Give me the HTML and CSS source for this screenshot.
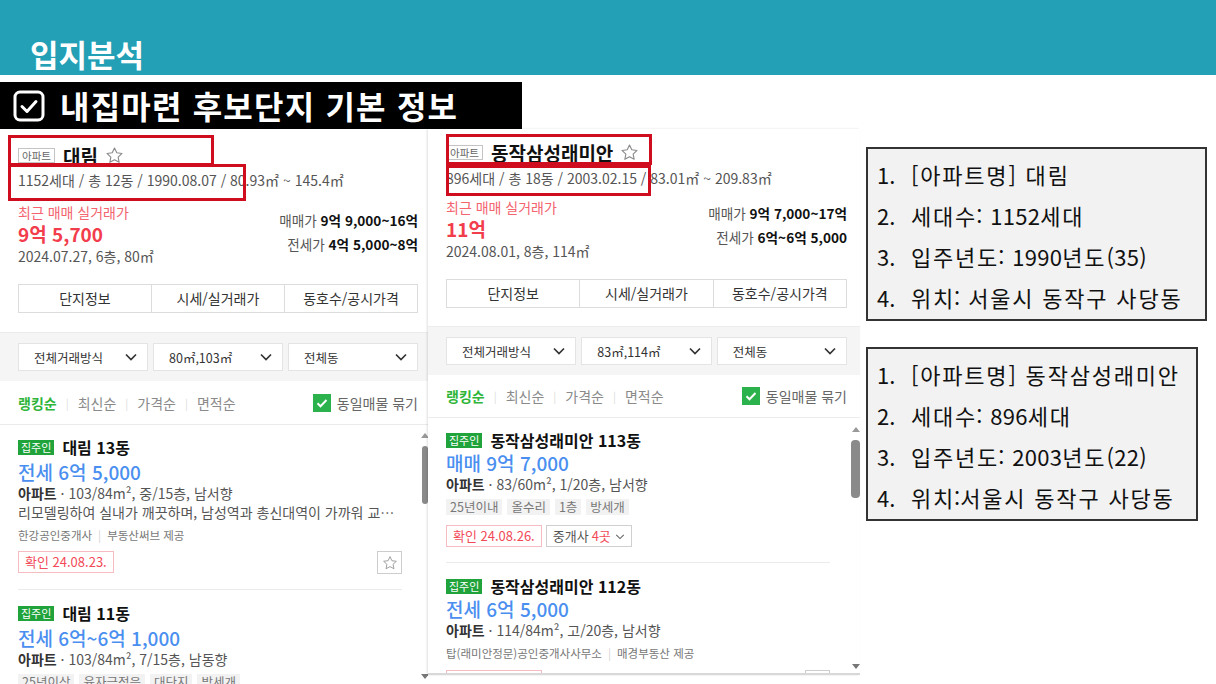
FILE: index.html
```html
<!DOCTYPE html>
<html lang="ko">
<head>
<meta charset="utf-8">
<title>입지분석</title>
<link rel="stylesheet" href="styles.css">
</head>
<body>
<header class="topbar"><h1 class="page-title">입지분석</h1></header>
<div class="section-band">
  <svg class="band-check" viewBox="0 0 32 32"><rect x="2" y="2" width="28" height="28" rx="5" fill="none" stroke="#fff" stroke-width="3"/><path d="M9 16.5l5 5 9-10" fill="none" stroke="#fff" stroke-width="3" stroke-linecap="round" stroke-linejoin="round"/></svg>
  <span class="band-text">내집마련 후보단지 기본 정보</span>
</div>
<main class="content">
  <section class="panel panel-left">
    <div class="complex">
      <div class="complex-title"><span class="type-tag">아파트</span><strong class="complex-name">대림</strong><svg class="star-icon" viewBox="0 0 24 24"><path d="M12 2.5l2.9 6.1 6.6.8-4.9 4.6 1.3 6.6L12 17.4l-5.9 3.2 1.3-6.6-4.9-4.6 6.6-.8z" fill="none" stroke="#8a8a8a" stroke-width="1.4" stroke-linejoin="round"/></svg></div>
      <div class="complex-meta">1152세대 / 총 12동 / 1990.08.07 / 80.93㎡ ~ 145.4㎡</div>
      <div class="price-block">
        <div class="recent">
          <div class="recent-label">최근 매매 실거래가</div>
          <div class="recent-price">9억 5,700</div>
          <div class="recent-date">2024.07.27, 6층, 80㎡</div>
        </div>
        <div class="range">
          <div class="range-row">매매가 <b>9억 9,000~16억</b></div>
          <div class="range-row">전세가 <b>4억 5,000~8억</b></div>
        </div>
      </div>
      <div class="tabs"><div class="tab">단지정보</div><div class="tab">시세/실거래가</div><div class="tab">동호수/공시가격</div></div>
    </div>
    <div class="filters">
      <div class="select"><span>전체거래방식</span><svg class="chev" viewBox="0 0 12 8"><path d="M1 1.5l5 5 5-5" fill="none" stroke="#333" stroke-width="1.7"/></svg></div>
      <div class="select"><span>80㎡,103㎡</span><svg class="chev" viewBox="0 0 12 8"><path d="M1 1.5l5 5 5-5" fill="none" stroke="#333" stroke-width="1.7"/></svg></div>
      <div class="select"><span>전체동</span><svg class="chev" viewBox="0 0 12 8"><path d="M1 1.5l5 5 5-5" fill="none" stroke="#333" stroke-width="1.7"/></svg></div>
    </div>
    <div class="sort">
      <div class="sort-opts"><span class="sort-on">랭킹순</span><span class="sep">|</span><span>최신순</span><span class="sep">|</span><span>가격순</span><span class="sep">|</span><span>면적순</span></div>
      <div class="group"><span class="cbox"><svg viewBox="0 0 18 18"><path d="M4.5 9.2l3 3 6-6.2" fill="none" stroke="#fff" stroke-width="2"/></svg></span>동일매물 묶기</div>
    </div>
    <div class="listings">
      <article class="item">
        <div class="item-title"><span class="owner-tag">집주인</span><strong class="item-name">대림 13동</strong></div>
        <div class="item-price">전세 6억 5,000</div>
        <div class="item-spec"><b>아파트</b> · 103/84m², 중/15층, 남서향</div>
        <div class="item-desc">리모델링하여 실내가 깨끗하며, 남성역과 총신대역이 가까워 교…</div>
        <div class="item-broker">한강공인중개사<span class="bsep">|</span>부동산써브 제공</div>
        <div class="item-actions">
          <div class="act-left"><span class="confirm">확인 24.08.23.</span></div>
          <span class="fav-box"><svg viewBox="0 0 24 24"><path d="M12 2.5l2.9 6.1 6.6.8-4.9 4.6 1.3 6.6L12 17.4l-5.9 3.2 1.3-6.6-4.9-4.6 6.6-.8z" fill="none" stroke="#999" stroke-width="1.4" stroke-linejoin="round"/></svg></span>
        </div>
      </article>
      <article class="item">
        <div class="item-title"><span class="owner-tag">집주인</span><strong class="item-name">대림 11동</strong></div>
        <div class="item-price">전세 6억~6억 1,000</div>
        <div class="item-spec"><b>아파트</b> · 103/84m², 7/15층, 남동향</div>
        <div class="chips"><span class="chip">25년이상</span><span class="chip">융자금적은</span><span class="chip">대단지</span><span class="chip">방세개</span></div>
      </article>
    </div>
    <div class="scroll scroll-left">
      <span class="arrow-up"></span>
      <span class="thumb"></span>
      <span class="arrow-down"></span>
    </div>
    <div class="mark mark-l1"></div>
    <div class="mark mark-l2"></div>
  </section>

  <section class="panel panel-right">
    <div class="complex">
      <div class="complex-title"><span class="type-tag">아파트</span><strong class="complex-name">동작삼성래미안</strong><svg class="star-icon" viewBox="0 0 24 24"><path d="M12 2.5l2.9 6.1 6.6.8-4.9 4.6 1.3 6.6L12 17.4l-5.9 3.2 1.3-6.6-4.9-4.6 6.6-.8z" fill="none" stroke="#8a8a8a" stroke-width="1.4" stroke-linejoin="round"/></svg></div>
      <div class="complex-meta">896세대 / 총 18동 / 2003.02.15 / 83.01㎡ ~ 209.83㎡</div>
      <div class="price-block">
        <div class="recent">
          <div class="recent-label">최근 매매 실거래가</div>
          <div class="recent-price">11억</div>
          <div class="recent-date">2024.08.01, 8층, 114㎡</div>
        </div>
        <div class="range">
          <div class="range-row">매매가 <b>9억 7,000~17억</b></div>
          <div class="range-row">전세가 <b>6억~6억 5,000</b></div>
        </div>
      </div>
      <div class="tabs"><div class="tab">단지정보</div><div class="tab">시세/실거래가</div><div class="tab">동호수/공시가격</div></div>
    </div>
    <div class="filters">
      <div class="select"><span>전체거래방식</span><svg class="chev" viewBox="0 0 12 8"><path d="M1 1.5l5 5 5-5" fill="none" stroke="#333" stroke-width="1.7"/></svg></div>
      <div class="select"><span>83㎡,114㎡</span><svg class="chev" viewBox="0 0 12 8"><path d="M1 1.5l5 5 5-5" fill="none" stroke="#333" stroke-width="1.7"/></svg></div>
      <div class="select"><span>전체동</span><svg class="chev" viewBox="0 0 12 8"><path d="M1 1.5l5 5 5-5" fill="none" stroke="#333" stroke-width="1.7"/></svg></div>
    </div>
    <div class="sort">
      <div class="sort-opts"><span class="sort-on">랭킹순</span><span class="sep">|</span><span>최신순</span><span class="sep">|</span><span>가격순</span><span class="sep">|</span><span>면적순</span></div>
      <div class="group"><span class="cbox"><svg viewBox="0 0 18 18"><path d="M4.5 9.2l3 3 6-6.2" fill="none" stroke="#fff" stroke-width="2"/></svg></span>동일매물 묶기</div>
    </div>
    <div class="listings">
      <article class="item">
        <div class="item-title"><span class="owner-tag">집주인</span><strong class="item-name">동작삼성래미안 113동</strong></div>
        <div class="item-price">매매 9억 7,000</div>
        <div class="item-spec"><b>아파트</b> · 83/60m², 1/20층, 남서향</div>
        <div class="chips"><span class="chip">25년이내</span><span class="chip">올수리</span><span class="chip">1층</span><span class="chip">방세개</span></div>
        <div class="item-actions">
          <div class="act-left"><span class="confirm">확인 24.08.26.</span><span class="agents">중개사 <em>4곳</em><svg class="chev-sm" viewBox="0 0 12 8"><path d="M1.5 2l4.5 4.5 4.5-4.5" fill="none" stroke="#666" stroke-width="1.3"/></svg></span></div>
        </div>
      </article>
      <article class="item">
        <div class="item-title"><span class="owner-tag">집주인</span><strong class="item-name">동작삼성래미안 112동</strong></div>
        <div class="item-price">전세 6억 5,000</div>
        <div class="item-spec"><b>아파트</b> · 114/84m², 고/20층, 남서향</div>
        <div class="item-broker">탑(래미안정문)공인중개사사무소<span class="bsep">|</span>매경부동산 제공</div>
        <div class="item-actions">
          <div class="act-left"><span class="confirm">확인 24.08.21.</span></div>
          <span class="fav-box"></span>
        </div>
      </article>
    </div>
    <div class="scroll scroll-right">
      <span class="arrow-up"></span>
      <span class="thumb"></span>
      <span class="arrow-down"></span>
    </div>
    <div class="mark mark-r1"></div>
    <div class="mark mark-r2"></div>
  </section>

  <aside class="info-col">
    <div class="info-box info-box-1">
      <div class="info-line"><span class="info-num">1.</span><span>[아파트명] 대림</span></div>
      <div class="info-line"><span class="info-num">2.</span><span>세대수<span class="pn">:</span> <span class="dg">1152</span>세대</span></div>
      <div class="info-line"><span class="info-num">3.</span><span>입주년도<span class="pn">:</span> <span class="dg">1990</span>년도<span class="dg">(35)</span></span></div>
      <div class="info-line"><span class="info-num">4.</span><span>위치<span class="pn">:</span> 서울시 동작구 사당동</span></div>
    </div>
    <div class="info-box info-box-2">
      <div class="info-line"><span class="info-num">1.</span><span>[아파트명] 동작삼성래미안</span></div>
      <div class="info-line"><span class="info-num">2.</span><span>세대수<span class="pn">:</span> <span class="dg">896</span>세대</span></div>
      <div class="info-line"><span class="info-num">3.</span><span>입주년도<span class="pn">:</span> <span class="dg">2003</span>년도<span class="dg">(22)</span></span></div>
      <div class="info-line"><span class="info-num">4.</span><span>위치<span class="pn">:</span>서울시 동작구 사당동</span></div>
    </div>
  </aside>
</main>
</body>
</html>
```
FILE: styles.css
```css
* { box-sizing: border-box; margin: 0; padding: 0; }
html, body { width: 1216px; height: 684px; overflow: hidden; background: #fff; }
body { font-family: "Noto Sans CJK KR", "Noto Sans", sans-serif; color: #222; }

/* header */
.topbar { height: 75px; background: #23a0b5; display: flex; align-items: flex-end; padding: 0 0 0 30px; }
.page-title { color: #fff; font-size: 31px; font-weight: 700; line-height: 42px; }

.section-band { margin-top: 7px; height: 47px; width: 522px; background: #000; display: flex; align-items: center; padding-left: 13px; gap: 15px; }
.band-check { width: 32px; height: 32px; flex: none; }
.band-text { color: #fff; font-size: 32px; font-weight: 700; letter-spacing: 1.2px; line-height: 47px; }

/* layout */
.content { display: flex; align-items: flex-start; }
.panel { position: relative; overflow: hidden; background: #fff; flex: none; }
.panel-left { width: 428px; height: 555px; }
.panel-right { width: 432px; height: 546px; border-bottom: 2px solid #d8d8d8; box-shadow: -1px 0 2px rgba(0,0,0,.12); }

/* complex header */
.complex { padding: 14px 10px 0 18px; }
.panel-right .complex { padding: 11px 13px 0 18px; }
.complex-title { display: flex; align-items: center; height: 24px; }
.type-tag { font-size: 10.5px; color: #666; border: 1px solid #c4c4c4; height: 15px; line-height: 13px; padding: 0 3px; margin-right: 8px; }
.complex-name { font-size: 19px; font-weight: 700; color: #111; }
.star-icon { width: 19px; height: 19px; margin-left: 7px; }
.complex-meta { margin-top: 3px; height: 20px; line-height: 20px; font-size: 14px; color: #555; white-space: nowrap; }
.panel-right .complex-meta { margin-top: 4px; }

.price-block { display: flex; justify-content: space-between; margin-top: 12px; }
.panel-right .price-block { margin-top: 9px; }
.recent-label { font-size: 14px; line-height: 20px; color: #f3646f; }
.recent-price { font-size: 19px; font-weight: 700; line-height: 24px; color: #f23d4c; }
.recent-date { font-size: 14px; line-height: 20px; color: #555; }
.range { padding-top: 6px; text-align: right; }
.panel-right .range { padding-top: 4px; }
.range-row { font-size: 13.6px; line-height: 24px; color: #555; }
.range-row b { color: #111; font-weight: 700; }

.tabs { display: flex; margin-top: 18px; height: 29px; border: 1px solid #dcdcdc; }
.tab { flex: 1; text-align: center; font-size: 14px; line-height: 27px; color: #333; border-left: 1px solid #dcdcdc; }
.tab:first-child { border-left: 0; }

/* filters */
.filters { margin-top: 19px; background: #f5f5f5; padding: 10px 10px 10px 18px; display: flex; gap: 5px; border-top: 1px solid #ececec; }
.panel-right .filters { margin-top: 18px; padding: 10px 13px 10px 18px; }
.select { flex: 1; height: 28px; background: #fff; border: 1px solid #e4e4e4; display: flex; align-items: center; justify-content: space-between; padding: 0 10px 0 15px; font-size: 12.5px; color: #333; }
.chev { width: 12px; height: 8px; }

/* sort row */
.sort { height: 44px; display: flex; align-items: center; justify-content: space-between; padding: 0 10px 0 18px; border-bottom: 1px solid #ebebeb; font-size: 14px; color: #8a8a8a; }
.panel-right .sort { height: 43px; padding: 0 13px 0 18px; }
.sort-opts { display: flex; align-items: center; }
.sort-on { color: #2fb53a; font-weight: 700; }
.sep { color: #ddd; margin: 0 9px; font-size: 11px; }
.group { display: flex; align-items: center; gap: 6px; color: #666; }
.cbox { width: 18px; height: 18px; background: #2cb24c; display: flex; }
.cbox svg { width: 18px; height: 18px; }

/* listings */
.listings { padding: 0 26px 0 18px; }
.panel-right .listings { padding: 0 30px 0 18px; }
.item { border-bottom: 1px solid #ebebeb; padding: 12px 0 15px; }
.item + .item { padding-top: 13px; }
.item-title { display: flex; align-items: center; height: 20px; gap: 8px; }
.owner-tag { background: #1fa33a; color: #fff; font-size: 11px; height: 15px; line-height: 15px; padding: 0 3px; }
.item-name { font-size: 16px; font-weight: 700; color: #111; }
.item-price { font-size: 19px; line-height: 26px; margin-top: 2px; color: #4a8ff0; font-weight: 500; }
.panel-right .item-price { margin-top: 0; }
.item-spec { font-size: 14px; line-height: 17px; color: #555; }
.item-spec b { font-weight: 700; color: #333; }
.item-desc { font-size: 14px; line-height: 20px; color: #555; white-space: nowrap; }
.item-broker { font-size: 11.5px; color: #777; line-height: 20px; margin-top: 3px; }
.panel-right .item-broker { margin-top: 4px; }
.bsep { color: #d4d4d4; margin: 0 6px; }
.item-actions { display: flex; justify-content: space-between; align-items: flex-start; margin-top: 6px; }
.panel-right .item-actions { margin-top: 10px; }
.panel-right .item-broker + .item-actions { margin-top: 7px; }
.act-left { display: flex; gap: 4px; }
.confirm { display: block; height: 22px; border: 1px solid #f6bcc1; color: #f24a58; font-size: 13px; padding: 0 6px; line-height: 20px; }
.agents { display: flex; align-items: center; height: 22px; border: 1px solid #cfcfcf; color: #555; font-size: 13px; padding: 0 6px; line-height: 20px; }
.agents em { font-style: normal; color: #f24a58; margin-left: 3px; }
.chev-sm { width: 10px; height: 7px; margin-left: 4px; }
.fav-box { width: 25px; height: 23px; border: 1px solid #cdcdcd; display: flex; align-items: center; justify-content: center; }
.fav-box svg { width: 16px; height: 16px; }
.chips { display: flex; gap: 5px; margin-top: 6px; }
.chip { background: #f2f2f2; color: #777; font-size: 12.5px; height: 16px; line-height: 16px; padding: 0 4px; }

/* scrollbars (overlay) */
.scroll { position: absolute; display: flex; flex-direction: column; align-items: center; }
.scroll-left { left: 422px; top: 304px; width: 6px; height: 246px; }
.scroll-right { left: 423px; top: 298px; width: 9px; height: 242px; }
.arrow-up { width: 0; height: 0; border-left: 4px solid transparent; border-right: 4px solid transparent; border-bottom: 5px solid #999; }
.arrow-down { width: 0; height: 0; border-left: 4px solid transparent; border-right: 4px solid transparent; border-top: 5px solid #777; margin-top: auto; }
.thumb { width: 100%; height: 58px; margin-top: 8px; background: #8a8a8a; border-radius: 4px; }

/* red highlight boxes (overlay annotations) */
.mark { position: absolute; border: 3px solid #cf0d1f; }
.mark-l1 { left: 8px; top: 6px; width: 206px; height: 31px; }
.mark-l2 { left: 8px; top: 35px; width: 238px; height: 37px; }
.mark-r1 { left: 18px; top: 5px; width: 206px; height: 31px; }
.mark-r2 { left: 18px; top: 36px; width: 205px; height: 31px; }

/* info boxes */
.info-col { margin: 18px 0 0 6px; display: flex; flex-direction: column; gap: 26px; }
.info-box { background: #f2f2f2; border: 2px solid #333; padding: 5px 0 1px 9px; }
.info-box-1 { width: 341px; }
.info-box-2 { width: 332px; }
.info-line { display: flex; font-size: 22px; letter-spacing: 1.8px; line-height: 41px; color: #111; white-space: nowrap; }
.info-num { width: 34px; flex: none; letter-spacing: 0; }
.info-line .dg { letter-spacing: 0.3px; }
.info-line .pn { letter-spacing: 0; margin-left: -1px; }
```
